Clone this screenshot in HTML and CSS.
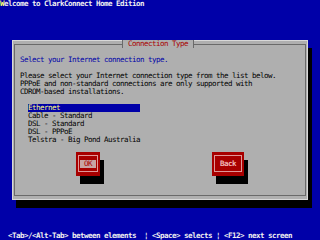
FILE: index.html
```html
<!DOCTYPE html>
<html lang="en">

<head>
    <meta charset="UTF-8">
    <meta name="viewport" content="width=device-width, initial-scale=1.0">
    <title>ClarkConnect Installer</title>
    <link rel="stylesheet" href="styles.css">
</head>

<body>

    <div class="screen">
        <div class="root-title"><span class="cursor">W</span>elcome to ClarkConnect Home Edition</div>

        <div class="window">
            <div class="frame">
                <div class="window-title">Connection Type</div>

                <p class="prompt">Select your Internet connection type.</p>
                <p class="info">Please select your Internet connection type from the list below.
PPPoE and non-standard connections are only supported with
CDROM-based installations.</p>

                <ul class="listbox">
                    <li class="selected">Ethernet</li>
                    <li>Cable - Standard</li>
                    <li>DSL - Standard</li>
                    <li>DSL - PPPoE</li>
                    <li>Telstra - Big Pond Australia</li>
                </ul>

                <div class="buttons">
                    <button class="btn btn-ok"><span class="btn-face"><span class="btn-label">OK</span></span></button>
                    <button class="btn btn-back"><span class="btn-face"><span class="btn-label">Back</span></span></button>
                </div>
            </div>
        </div>

        <div class="helpline">  &lt;Tab&gt;/&lt;Alt-Tab&gt; between elements  ¦ &lt;Space&gt; selects ¦ &lt;F12&gt; next screen</div>
    </div>

</body>

</html>
```

FILE: styles.css
```css
/* text-mode installer screen, 80x30 cells of 4x8px */
* {
    box-sizing: border-box;
    margin: 0;
    padding: 0;
}

html,
body {
    width: 320px;
    height: 240px;
    overflow: hidden;
}

body {
    background-color: #0000a8;
    font-family: "DejaVu Sans Mono", "Liberation Mono", monospace;
    font-size: 7.5px;
    letter-spacing: -0.515px;
    line-height: 8px;
}

.screen {
    height: 240px;
    display: flex;
    flex-direction: column;
}

.root-title {
    height: 8px;
    color: #f0f0f0;
    font-weight: bold;
    white-space: pre;
}

.cursor {
    color: #ffff70;
}

.window {
    width: 296px;
    height: 160px;
    margin: 32px 0 0 12px;
    padding: 3px 1px;
    background-color: #afafaf;
    border: 1px solid #d8d8d8;
    box-shadow: 4px 8px 0 #000;
}

.frame {
    position: relative;
    height: 100%;
    padding: 11px 0 0 5px;
    border: 1px solid #6a6a6a;
}

/* title sits on top of the frame line */
.window-title {
    position: absolute;
    left: 107px;
    top: -5px;
    height: 8px;
    padding: 0 5px;
    background-color: #afafaf;
    color: #a80000;
    border-left: 1px solid #6a6a6a;
    border-right: 1px solid #6a6a6a;
}

.prompt {
    color: #0000a8;
    white-space: pre;
}

.info {
    margin-top: 8px;
    color: #000;
    white-space: pre;
}

.listbox {
    list-style: none;
    width: 112px;
    margin: 8px 0 0 8px;
}

.listbox li {
    color: #000;
    white-space: pre;
}

.listbox .selected {
    background-color: #0000a8;
    color: #ffff80;
}

.buttons {
    display: flex;
    gap: 112px;
    margin: 8px 0 0 56px;
}

.btn {
    display: flex;
    height: 24px;
    padding: 3px 2px 4px 2px;
    border: none;
    background-color: #a80000;
    box-shadow: 4px 8px 0 #000;
    font: inherit;
    letter-spacing: inherit;
    cursor: pointer;
}

.btn-ok {
    width: 24px;
}

.btn-back {
    width: 32px;
}

.btn-face {
    flex: 1;
    display: flex;
    align-items: center;
    justify-content: center;
    border: 1px solid #e09898;
}

.btn-label {
    height: 8px;
    line-height: 8px;
}

.btn-ok .btn-label {
    padding: 0 4px;
    background-color: #c8a4a4;
    color: #a80000;
}

.btn-back .btn-label {
    color: #f0b8b8;
    font-weight: bold;
}

.helpline {
    height: 8px;
    margin-top: auto;
    color: #f0f0f0;
    font-weight: bold;
    white-space: pre;
}
```
